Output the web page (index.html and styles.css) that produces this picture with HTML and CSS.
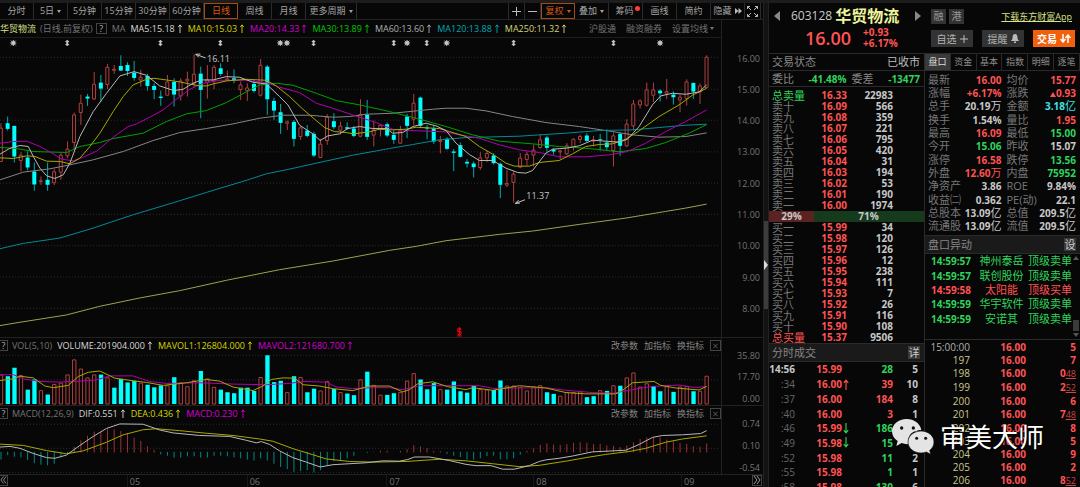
FILE: index.html
```html
<!DOCTYPE html>
<html lang="zh-CN">
<head>
<meta charset="utf-8">
<title>华贸物流 603128</title>
<link rel="stylesheet" href="styles.css">
</head>
<body>
<svg class="defs" aria-hidden="true">
  <symbol id="up" viewBox="0 0 6 10"><path d="M3 10V1M1 3.5L3 1L5 3.5" fill="none" stroke="currentColor"/></symbol>
  <symbol id="close" viewBox="0 0 12 12"><path d="M3 3L9 9M9 3L3 9" fill="none" stroke="currentColor"/></symbol>
</svg>
<div class="app">
  <main class="charts">
    <nav class="toolbar">
      <div class="group">
        <button class="tb">分时</button><button class="tb">5日<i class="caret"></i></button><button class="tb">5分钟</button><button class="tb">15分钟</button><button class="tb">30分钟</button><button class="tb">60分钟</button><button class="tb active">日线</button><button class="tb">周线</button><button class="tb">月线</button><button class="tb wide">更多周期<i class="caret"></i></button>
      </div>
      <div class="group right">
        <button class="tb icon" aria-label="放大"><svg width="9" height="9" viewBox="0 0 9 9"><path d="M4.5 0V9M0 4.5H9" stroke="#bbb"/></svg></button><button class="tb icon" aria-label="缩小"><svg width="9" height="9" viewBox="0 0 9 9"><path d="M0 4.5H9" stroke="#bbb"/></svg></button><button class="tb active">复权<i class="caret"></i></button><button class="tb">叠加<i class="caret"></i></button><button class="tb">筹码<i class="dot"></i></button><button class="tb">画线</button><button class="tb">简约</button><button class="tb">隐藏<svg width="7" height="6" viewBox="0 0 7 6"><path d="M0 0L3.5 3L0 6ZM3.5 0L7 3L3.5 6Z" fill="#bbb"/></svg></button><button class="tb icon" aria-label="全屏"><svg width="11" height="11" viewBox="0 0 11 11"><path d="M.5 3V.5H3M.5 .5L4 4M8 .5H10.500V3M10.500 .5L7 4M.5 8V10.500H3M.5 10.500L4 7M8 10.500H10.500V8M10.500 10.500L7 7" fill="none" stroke="#bbb"/></svg></button>
      </div>
    </nav>

    <section class="panel price">
      <header class="legend">
        <b class="stock">华贸物流</b><span class="dim">(日线,前复权)</span><button class="help">?</button><span class="dim">MA</span>
        <span class="c-white">MA5:15.18<svg class="up"><use href="#up"/></svg></span>
        <span class="c-yellow">MA10:15.03<svg class="up"><use href="#up"/></svg></span>
        <span class="c-magenta">MA20:14.33<svg class="up"><use href="#up"/></svg></span>
        <span class="c-green">MA30:13.89<svg class="up"><use href="#up"/></svg></span>
        <span class="c-gray">MA60:13.60<svg class="up"><use href="#up"/></svg></span>
        <span class="c-teal">MA120:13.88<svg class="up"><use href="#up"/></svg></span>
        <span class="c-khaki">MA250:11.32<svg class="up"><use href="#up"/></svg></span>
        <span class="links"><a href="#">沪股通</a><a href="#">融资融券</a><a href="#">设置均线<i class="caret"></i></a></span>
      </header>
      <div class="plot">
        <svg id="price" viewBox="0 114 2166 897" preserveAspectRatio="none"></svg>
        <span class="note high">16.11</span>
        <span class="note low">11.37</span>
      </div>
      <div class="axis nine"><span>16.00</span><span>15.00</span><span>14.00</span><span>13.00</span><span>12.00</span><span>11.00</span><span>10.00</span><span>9.00</span><span>8.00</span></div>
    </section>

    <section class="panel volume">
      <header class="legend">
        <button class="help">?</button><span class="dim">VOL(5,10)</span>
        <span class="c-white">VOLUME:201904.000<svg class="up"><use href="#up"/></svg></span>
        <span class="c-yellow">MAVOL1:126804.000<svg class="up"><use href="#up"/></svg></span>
        <span class="c-magenta">MAVOL2:121680.700<svg class="up"><use href="#up"/></svg></span>
        <span class="actions"><a href="#">改参数</a><a href="#">加指标</a><a href="#">换指标</a><button class="help" aria-label="关闭"><svg><use href="#close"/></svg></button></span>
      </header>
      <div class="plot"><svg id="volume" viewBox="0 54 2166 156" preserveAspectRatio="none"></svg></div>
      <div class="axis three"><span>35.80</span><span>17.70</span><span>0.00</span></div>
    </section>

    <section class="panel macd">
      <header class="legend">
        <button class="help">?</button><span class="dim">MACD(12,26,9)</span>
        <span class="c-white">DIF:0.551<svg class="up"><use href="#up"/></svg></span>
        <span class="c-yellow">DEA:0.436<svg class="up"><use href="#up"/></svg></span>
        <span class="c-magenta">MACD:0.230<svg class="up"><use href="#up"/></svg></span>
        <span class="actions"><a href="#">改参数</a><a href="#">加指标</a><a href="#">换指标</a><button class="help" aria-label="关闭"><svg><use href="#close"/></svg></button></span>
      </header>
      <div class="plot"><svg id="macd" viewBox="0 255 2166 162" preserveAspectRatio="none"></svg></div>
      <div class="axis three"><span>0.74</span><span>0.10</span><span>-0.54</span></div>
    </section>

    <footer class="months">
      <button class="page" aria-label="向前"><svg width="8" height="8" viewBox="0 0 8 8"><path d="M4 0L1 4L4 8M7 0L4 4L7 8" fill="none" stroke="#999"/></svg></button>
      <span>05</span><span>06</span><span>07</span><span>08</span><span>09</span>
      <button class="page" aria-label="向后"><svg width="8" height="8" viewBox="0 0 8 8"><path d="M1 0L4 4L1 8M4 0L7 4L4 8" fill="none" stroke="#999"/></svg></button>
    </footer>
  </main>

  <div class="splitter"><span class="gap"></span><button class="handle" aria-label="收起"><svg width="4" height="10" viewBox="0 0 4 10"><path d="M0 0L4 5L0 10Z" fill="#ddd"/></svg></button></div>

  <aside class="quote">
    <header class="head">
      <div class="ident">
        <svg width="6" height="10" viewBox="0 0 6 10"><path d="M6 0L0 5L6 10Z" fill="#888"/></svg>
        <span class="code">603128</span><h1>华贸物流</h1>
        <svg class="next" width="6" height="10" viewBox="0 0 6 10"><path d="M0 0L6 5L0 10Z" fill="#888"/></svg>
      </div>
      <div class="tags"><span>融</span><span>港</span><a href="#">下载东方财富App</a></div>
      <div class="last"><strong>16.00</strong><span>+0.93<br>+6.17%</span></div>
      <div class="cta">
        <button>自选<svg width="8" height="8" viewBox="0 0 8 8"><path d="M4 0V8M0 4H8" stroke="#bbb"/></svg></button>
        <button>提醒<svg width="8" height="9" viewBox="0 0 8 9"><path d="M4 0C2 0 1.500 2 1.500 4C1.500 6 0 6 0 7H8C8 6 6.500 6 6.500 4C6.500 2 6 0 4 0ZM3 7.500H5V9H3Z" fill="#bbb"/></svg></button>
        <button class="trade">交易<svg width="11" height="9" viewBox="0 0 11 9"><path d="M3 0V8M.5 5L3 8L5.500 5M8 9V1M5.500 4L8 1L10.500 4" fill="none" stroke="#fff" stroke-width="1.500"/></svg></button>
      </div>
    </header>

    <section class="book">
      <div class="bar status"><span>交易状态</span><span class="lit">已收市</span></div>
      <div class="bar ratio"><span>委比</span><b class="g">-41.48%</b><span>委差</span><b class="g">-13477</b></div>
      <table class="levels asks">
        <tr class="g"><th>总卖量</th><td>16.33</td><td>22983</td></tr>
        <tr><th>卖十</th><td>16.09</td><td>566</td></tr>
        <tr><th>卖九</th><td>16.08</td><td>359</td></tr>
        <tr><th>卖八</th><td>16.07</td><td>221</td></tr>
        <tr><th>卖七</th><td>16.06</td><td>795</td></tr>
        <tr><th>卖六</th><td>16.05</td><td>420</td></tr>
        <tr><th>卖五</th><td>16.04</td><td>31</td></tr>
        <tr><th>卖四</th><td>16.03</td><td>194</td></tr>
        <tr><th>卖三</th><td>16.02</td><td>53</td></tr>
        <tr><th>卖二</th><td>16.01</td><td>190</td></tr>
        <tr><th>卖一</th><td>16.00</td><td>1974</td></tr>
      </table>
      <div class="balance"><b>29%</b><b>71%</b></div>
      <table class="levels">
        <tr><th>买一</th><td>15.99</td><td>34</td></tr>
        <tr><th>买二</th><td>15.98</td><td>120</td></tr>
        <tr><th>买三</th><td>15.97</td><td>126</td></tr>
        <tr><th>买四</th><td>15.96</td><td>12</td></tr>
        <tr><th>买五</th><td>15.95</td><td>238</td></tr>
        <tr><th>买六</th><td>15.94</td><td>111</td></tr>
        <tr><th>买七</th><td>15.93</td><td>7</td></tr>
        <tr><th>买八</th><td>15.92</td><td>26</td></tr>
        <tr><th>买九</th><td>15.91</td><td>116</td></tr>
        <tr><th>买十</th><td>15.90</td><td>108</td></tr>
        <tr class="r"><th>总买量</th><td>15.37</td><td>9506</td></tr>
      </table>
      <div class="bar title"><span>分时成交</span><button>详</button></div>
      <div class="fill">
        <table class="ticks">
          <tr><th class="lit">14:56</th><td>15.99</td><td></td><td class="g">28</td><td>5</td></tr>
          <tr><th>:34</th><td>16.00</td><td><svg class="arr"><use href="#up"/></svg></td><td class="r">39</td><td>10</td></tr>
          <tr><th>:37</th><td>16.00</td><td></td><td class="r">184</td><td>8</td></tr>
          <tr><th>:40</th><td>16.00</td><td></td><td class="r">3</td><td>1</td></tr>
          <tr><th>:46</th><td>15.99</td><td><svg class="arr down"><use href="#up"/></svg></td><td class="g">186</td><td>4</td></tr>
          <tr><th>:49</th><td>15.98</td><td><svg class="arr down"><use href="#up"/></svg></td><td class="g">15</td><td>4</td></tr>
          <tr><th>:52</th><td>15.98</td><td></td><td class="g">11</td><td>2</td></tr>
          <tr><th>:55</th><td>15.98</td><td></td><td class="g">1</td><td>1</td></tr>
          <tr><th>:58</th><td>15.98</td><td></td><td class="g">130</td><td>6</td></tr>
        </table>
      </div>
    </section>

    <section class="detail">
      <nav class="tabs"><button class="on">盘口</button><button>资金</button><button>基本</button><button>指数</button><button>明细</button><button>逐笔</button></nav>
      <table class="stats">
        <tr><th>最新</th><td class="r">16.00</td><th>均价</th><td class="r">15.77</td></tr>
        <tr><th>涨幅</th><td class="r">+6.17%</td><th>涨跌</th><td class="r"><i class="tri"></i>0.93</td></tr>
        <tr><th>总手</th><td>20.19<em>万</em></td><th>金额</th><td class="t">3.18<em>亿</em></td></tr>
        <tr><th>换手</th><td>1.54%</td><th>量比</th><td class="r">1.95</td></tr>
        <tr><th>最高</th><td class="r">16.09</td><th>最低</th><td class="g">15.00</td></tr>
        <tr><th>今开</th><td class="g">15.06</td><th>昨收</th><td>15.07</td></tr>
        <tr><th>涨停</th><td class="r">16.58</td><th>跌停</th><td class="g">13.56</td></tr>
        <tr><th>外盘</th><td class="r">12.60<em>万</em></td><th>内盘</th><td class="g">75952</td></tr>
        <tr><th>净资产</th><td>3.86</td><th>ROE</th><td>9.84%</td></tr>
        <tr><th>收益㈡</th><td>0.362</td><th>PE(动)</th><td>22.1</td></tr>
        <tr><th>总股本</th><td>13.09<em>亿</em></td><th>总值</th><td>209.5<em>亿</em></td></tr>
        <tr><th>流通股</th><td>13.09<em>亿</em></td><th>流值</th><td>209.5<em>亿</em></td></tr>
      </table>
      <div class="bar title"><span>盘口异动</span><button>设</button></div>
      <div class="alerts">
        <table>
          <tr class="g"><th>14:59:57</th><td>神州泰岳</td><td>顶级卖单</td></tr>
          <tr class="g"><th>14:59:57</th><td>联创股份</td><td>顶级卖单</td></tr>
          <tr class="r"><th>14:59:58</th><td>太阳能</td><td>顶级买单</td></tr>
          <tr class="g"><th>14:59:59</th><td>华宇软件</td><td>顶级卖单</td></tr>
          <tr class="g"><th>14:59:59</th><td>安诺其</td><td>顶级卖单</td></tr>
        </table>
        <div class="scroll"><i class="sup"></i><i class="thumb"></i><i class="sdn"></i></div>
      </div>
      <table class="trades">
        <tr><th class="lit">15:00:00</th><td>16.00</td><td>5</td></tr>
        <tr><th>197</th><td>16.00</td><td>7</td></tr>
        <tr><th>198</th><td>16.00</td><td>0<u>48</u></td></tr>
        <tr><th>199</th><td>16.00</td><td>2<u>52</u></td></tr>
        <tr><th>200</th><td>16.00</td><td>6</td></tr>
        <tr><th>201</th><td>16.00</td><td>7<u>48</u></td></tr>
        <tr><th>202</th><td>16.00</td><td>8</td></tr>
        <tr><th>203</th><td>16.00</td><td>5</td></tr>
        <tr><th>204</th><td>16.00</td><td>9</td></tr>
        <tr><th>205</th><td>16.00</td><td>2</td></tr>
        <tr><th>206</th><td>16.00</td><td>8<u>52</u></td></tr>
      </table>
    </section>
  </aside>

  <div class="watermark">
    <svg width="42" height="36" viewBox="0 0 126 108"><path d="M44 0C20 0 0 16 0 37C0 49 6 59 17 66L13 81L29 72C36 75 44 76 50 75C43 50 62 33 88 33C84 13 66 0 44 0Z" fill="#e4e4e4"/><path d="M87 36C65 36 48 51 48 69C48 88 66 102 87 102C93 102 98 101 103 99L116 106L113 94C121 88 126 79 126 69C126 51 109 36 87 36Z" fill="#e4e4e4" stroke="#111" stroke-width="2"/><g fill="#111"><circle cx="29" cy="27" r="5"/><circle cx="64" cy="27" r="5"/><circle cx="74" cy="58" r="4.500"/><circle cx="101" cy="58" r="4.500"/></g></svg>
    <span>审美大师</span>
  </div>
</div>
<script src="chart.js"></script>
</body>
</html>
```
FILE: styles.css
```css
* { box-sizing: border-box; }
html, body { height: 100%; }
body {
  margin: 0;
  overflow: hidden;
  background: #070707;
  color: #c8c8c8;
  font: 9px/12px "Open Sans", "Noto Sans CJK SC", sans-serif;
}
button {
  margin: 0; padding: 0; border: 0;
  background: none; color: inherit; font: inherit;
}
a { color: inherit; text-decoration: none; }
table { border-collapse: collapse; width: 100%; }
th, td { padding: 0; font-weight: 700; text-align: right; white-space: nowrap; }
th { font-weight: 400; text-align: left; }
.defs { position: absolute; width: 0; height: 0; }
.r { color: #ff5353; }
.g { color: #2fd45c; }
.t { color: #42e0e6; }
.lit { color: #bdbdbd; }

.app {
  position: relative;
  display: grid;
  grid-template-columns: minmax(0, 1fr) 5px 311px;
  height: 100vh;
  border-top: 3px solid #1d1d1d;
}

/* left: charts */
.charts {
  display: grid;
  grid-template-rows: 17px minmax(0, 1fr) 68px 69px 13px;
  min-width: 0;
  border-right: 1px solid #222;
}
.toolbar { display: flex; justify-content: space-between; border-bottom: 1px solid #222; }
.group { display: flex; }
.group.right { border-left: 1px solid #2c2c2c; padding-right: 2px; }
.tb {
  display: flex; align-items: center; justify-content: center; gap: 3px;
  width: 34px; height: 16px;
  border-right: 1px solid #2c2c2c;
  color: #a4a4a4;
  white-space: nowrap;
}
.tb.wide { width: 51px; }
.tb.icon { width: 16px; }
.tb.active { border: 1px solid #a44a14; color: #d8590f; }
.caret { border: 2px solid transparent; border-top: 3px solid currentColor; border-bottom: 0; }
.dot { width: 5px; height: 5px; margin: 0 -4px 5px -2px; border-radius: 50%; background: #ff3b3b; }

.panel {
  display: grid;
  grid-template: "legend axis" auto "plot axis" minmax(0, 1fr) / minmax(0, 1fr) 41px;
  border-bottom: 1px solid #222;
}
.legend {
  grid-area: legend;
  display: flex; align-items: center; gap: 5px;
  height: 16px;
  border-right: 1px solid #222;
  white-space: nowrap;
}
.price .legend { height: 18px; border-bottom: 1px solid #1c1c1c; }
.legend span { display: flex; align-items: center; }
.legend .up { width: 6px; height: 9px; margin-left: 2px; }
.stock { color: #d9e08a; font-weight: 400; }
.dim { color: #747474; }
.price .dim:nth-child(2) { margin-left: -1px; }
.help {
  display: flex; align-items: center; justify-content: center;
  width: 11px; height: 11px;
  border: 1px solid #444;
  color: #b0b0b0;
}
.price .help { margin-left: -2px; }
.help svg { width: 10px; height: 10px; color: #777; }
.volume .legend > .help, .macd .legend > .help { width: 8px; border-left: 0; margin-right: -1px; }
.c-white { color: #d8d8d8; } .c-yellow { color: #d6d600; } .c-magenta { color: #d400d4; }
.c-green { color: #00c800; } .c-gray { color: #b0b0b0; } .c-teal { color: #00a8b8; } .c-khaki { color: #d6d67a; }
.legend .links { margin-left: auto; padding-right: 7px; gap: 10px; color: #747474; }
.links a { display: flex; align-items: center; gap: 2px; }
.legend .actions { margin-left: auto; gap: 6px; color: #848484; }
.plot { grid-area: plot; position: relative; min-height: 0; border-right: 1px solid #222; }
.plot svg { display: block; width: 100%; height: 100%; }
.plot svg * { vector-effect: non-scaling-stroke; }
.note { position: absolute; color: #c8c8c8; }
.note.high { left: 207px; top: 5%; }
.note.low { left: 73%; top: 51%; }
.axis {
  grid-area: axis;
  display: flex; flex-direction: column;
  padding-right: 3px;
  color: #747474;
  text-align: right;
}
.axis.nine { padding: 23px 3px 12px 0; }
.axis.nine span { flex: 1; display: flex; align-items: center; justify-content: flex-end; }
.axis.three { justify-content: space-between; padding-top: 12px; }

.grid { stroke: #2b2b2b; stroke-dasharray: 1 2; fill: none; }
.up-wick, .up-body { stroke: #b04040; fill: #070707; }
.up-wick { fill: none; }
.down-wick { stroke: #0aa; }
.down-body { fill: #0ff; }
.mark { stroke: #c4c4c4; fill: none; }
.mark-dot { fill: #c4c4c4; }
.line { fill: none; }
.s-white { stroke: #b8b8b8; } .s-yellow { stroke: #a8a800; } .s-magenta { stroke: #b000b0; }
.s-green { stroke: #00a000; } .s-gray { stroke: #858585; } .s-teal { stroke: #008a96; } .s-khaki { stroke: #a0a050; }
.pos { stroke: #a03030; } .neg { stroke: #088; }
.flag { stroke: #f00; fill: none; }

.months {
  display: grid;
  grid-template-columns: 127fr 120fr 140fr 147fr 148fr 71fr 11px;
  color: #747474;
  line-height: 13px;
}
.months span { border-left: 1px solid #181818; padding-left: 2px; }
.page {
  display: flex; align-items: center; justify-content: center;
  width: 10px; height: 11px;
  border: 1px solid #444;
}
.page:first-child { width: 8px; border-left: 0; }

.splitter { background: #131313; border-right: 1px solid #222; display: grid; grid-template-rows: 45% 88px; }
.handle { display: flex; align-items: center; background: #3c3c3c; }

/* right: quote */
.quote {
  display: grid;
  grid-template: "head head" 51px "book detail" minmax(0, 1fr) / 156px minmax(0, 1fr);
  min-width: 0;
  overflow: hidden;
}
.head {
  grid-area: head;
  display: grid;
  grid-template: 25px 25px / 162px minmax(0, 1fr);
  border-bottom: 1px solid #2a2a2a;
}
.ident { display: flex; align-items: center; padding: 0 10px 0 5px; }
.code { margin-left: 11px; font-size: 12px; }
.ident h1 { margin: 0 0 0 3px; font-size: 16px; font-weight: 700; color: #eef49a; line-height: 20px; white-space: nowrap; }
.next { margin-left: auto; }
.tags { display: flex; align-items: center; gap: 3px; padding: 2px 8px 0 0; }
.tags span { width: 15px; line-height: 15px; background: #333; color: #999; text-align: center; font-size: 10px; }
.tags a { margin-left: auto; color: #d9e08a; text-decoration: underline; white-space: nowrap; }
.last { display: flex; align-items: center; gap: 12px; padding: 0 0 6px 36px; color: #ff5353; }
.last strong { font-size: 18px; font-weight: 600; }
.last span { font-size: 10px; font-weight: 700; line-height: 11px; }
.cta { display: flex; justify-content: space-between; padding: 2px 5px 6px 0; font-size: 10px; }
.cta button {
  display: flex; align-items: center; justify-content: center; gap: 3px;
  width: 42px; height: 17px; background: #333; color: #b4b4b4;
}
.cta .trade { background: #f2600c; color: #fff; font-weight: 700; }

.book { grid-area: book; border-right: 1px solid #2a2a2a; display: flex; flex-direction: column; min-height: 0; }
.bar {
  display: flex; align-items: center; justify-content: space-between; flex: none;
  height: 17px; padding: 0 4px 0 3px;
  border-bottom: 1px solid #2a2a2a;
  color: #868686;
  font-size: 11px;
}
.bar b { font-size: 10px; }
.ratio { height: 16px; }
.ratio b:nth-child(2) { margin: 0 0 0 auto; padding-right: 5px; }
.ratio b:last-child { margin-left: auto; }
.title { height: 19px; background: #1a1a1a; border-top: 1px solid #2a2a2a; }
.title button { width: 12px; line-height: 13px; background: #3a3a3a; color: #ccc; }
.levels { font-size: 10px; line-height: 11px; table-layout: fixed; flex: none; }
.levels.asks { margin-top: 3px; }
.levels th { height: 11px; width: 37px; padding-left: 3px; font-size: 11px; color: #787878; }
.levels .g th { color: #2fd45c; }
.levels .r th { color: #ff5353; }
.levels td:nth-child(2) { width: 41px; color: #ff5353; }
.levels td:nth-child(3) { color: #c8c8c8; padding-right: 31px; }
.balance { display: grid; grid-template-columns: 29fr 71fr; flex: none; font-size: 10px; line-height: 11px; text-align: center; }
.balance b:first-child { background: #5a2222; }
.balance b:last-child { background: #153a1c; padding-right: 1px; }
.fill { flex: 1; margin-bottom: -7px; min-height: 0; }
.ticks { height: 100%; font-size: 10px; line-height: 12px; table-layout: fixed; }
.ticks th { width: 26px; text-align: right; color: #686868; }
.ticks th.lit { color: #c8c8c8; font-weight: 700; }
.ticks td:nth-child(2) { width: 47px; color: #ff5353; }
.ticks td:nth-child(3) { width: 8px; color: #ff5353; text-align: left; }
.ticks td:nth-child(4) { width: 43px; }
.ticks td:nth-child(5) { padding-right: 6px; }
.arr { display: block; width: 8px; height: 11px; stroke-width: 1; }
.down { transform: rotate(180deg); color: #2fd45c; }

.detail { grid-area: detail; display: flex; flex-direction: column; min-width: 0; min-height: 0; }
.tabs { display: flex; flex: none; height: 17px; border-bottom: 1px solid #2a2a2a; }
.tabs button { flex: 1; border-right: 1px solid #2a2a2a; color: #8c8c8c; }
.tabs .on { background: #3a3a3a; color: #ddd; }
.stats { height: 160px; margin: 2px 0; font-size: 10px; line-height: 12px; table-layout: fixed; flex: none; }
.stats th { width: 32px; padding-left: 3px; color: #787878; font-size: 11px; }
.stats th:nth-child(3) { width: 34px; padding-left: 5px; }
.stats td:last-child { padding-right: 4px; }
.stats em { font-style: normal; font-weight: 400; font-size: 11px; }
.tri { display: inline-block; border: 3px solid transparent; border-top: 0; border-bottom: 5px solid currentColor; }
.alerts { display: flex; flex: none; height: 86px; border-bottom: 1px solid #2a2a2a; }
.alerts table { height: 72px; font-size: 11px; line-height: 14px; table-layout: fixed; }
.alerts th { width: 46px; font-size: 10px; font-weight: 700; text-align: right; }
.alerts td { font-weight: 400; text-align: center; padding-left: 5px; }
.alerts td:last-child { width: 45px; padding-left: 0; text-align: right; }
.scroll { display: flex; flex-direction: column; align-items: center; flex: none; width: 8px; padding: 2px 0; }
.scroll .thumb { width: 6px; height: 11px; margin: auto 0 2px; background: #3a3a3a; }
.sup { border: 3px solid transparent; border-top: 0; border-bottom: 4px solid #555; }
.sdn { border: 3px solid transparent; border-bottom: 0; border-top: 4px solid #555; }
.trades { flex: 1; display: table; height: 146px; font-size: 10px; line-height: 12px; table-layout: fixed; }
.trades th { width: 45px; text-align: right; color: #c9c98a; }
.trades th.lit { color: #b0b0b0; }
.trades td { color: #ff5353; }
.trades td:nth-child(2) { width: 56px; }
.trades td:last-child { padding-right: 4px; }
.trades u { font-size: 9px; font-weight: 400; color: #c44; }

.watermark {
  position: absolute; right: 36px; bottom: 32px;
  display: flex; align-items: center; gap: 6px;
  color: #fff; font-size: 26px; line-height: 36px;
  text-shadow: 1px 1px 1px #000;
}
```
FILE: chart.js
```js
const STEP = 20, X0 = 3;
const x = i => X0 + i * STEP;

// body top, body bottom, high, low; a leading 1 marks a falling day
const days = `0 385 485 370 485|1 370 387 350 392|1 378 470 378 488|0 466 482 457 515|1 473 503 455 512|1 515 554 488 573|0 543 545 530 555|1 540 555 488 573|0 516 549 508 556|0 466 517 460 540|0 448 468 425 475|0 345 428 338 450|0 310 338 284 375|1 290 296 282 318|0 253 297 216 300|1 248 266 225 305|0 202 254 192 268|0 208 211 195 222|1 198 212 166 212|1 195 213 187 228|1 218 234 183 242|0 232 240 210 260|1 228 258 222 272|1 258 270 250 298|1 290 294 272 318|0 246 286 225 286|1 246 284 235 320|0 243 288 235 302|0 238 243 215 290|0 223 250 163 262|1 221 270 200 355|0 240 247 195 296|0 202 243 195 268|1 205 222 190 228|0 237 240 212 242|1 235 240 208 250|0 255 269 245 300|0 264 272 250 303|1 252 273 240 278|0 196 286 177 290|1 200 298 195 345|1 303 332 293 360|1 337 369 312 402|0 366 370 362 390|1 366 417 360 440|0 384 410 380 420|1 392 408 375 412|1 402 467 396 472|0 433 473 417 475|0 352 422 343 435|1 364 382 340 388|0 379 391 365 404|1 382 387 367 390|1 386 408 378 412|0 344 409 298 412|1 344 411 300 420|0 390 406 362 440|0 376 388 374 410|1 373 407 368 412|1 405 420 392 432|0 393 430 378 432|1 350 378 342 415|0 310 358 282 375|1 293 378 290 385|1 383 386 375 418|1 386 425 376 432|0 422 425 408 461|1 417 447 412 450|1 455 459 448 514|1 436 471 428 473|1 486 491 478 503|1 491 502 485 533|0 474 503 457 510|0 461 474 452 487|1 467 490 460 494|1 492 555 488 595|0 551 556 510 562|0 523 548 515 608|0 475 502 460 505|0 464 479 455 497|0 451 466 434 500|0 420 443 402 446|1 413 444 408 455|1 449 455 445 465|0 453 456 450 478|0 438 462 430 466|0 418 443 416 452|0 410 419 404 430|1 407 423 400 426|0 421 424 408 440|1 418 420 402 452|1 428 442 388 450|0 408 452 398 500|1 402 438 398 468|0 373 438 358 442|0 312 378 300 392|0 303 315 298 326|0 270 316 248 320|0 270 286 248 307|1 272 280 268 305|0 275 280 237 298|1 284 292 274 314|0 292 300 284 337|0 246 296 238 317|1 249 275 248 297|0 258 276 250 312|0 172 263 166 265`
  .split('|').map(r => r.split(' ').map(Number));

// bar tops, negative for a falling day
const volumes = [118,-122,-96,120,-163,-132,166,-178,147,143,118,72,100,127,118,-117,127,-157,-130,-141,-136,143,-148,-156,-150,151,-125,142,154,136,-106,130,156,-163,-171,-174,-157,-157,-167,126,-58,-140,-136,172,-122,126,-171,-160,167,138,-161,172,-175,-180,133,-108,150,180,-179,-174,172,137,114,-132,-162,-143,163,-163,-138,-168,-172,-151,163,164,-164,-135,152,152,156,167,155,151,-171,-176,183,172,172,170,-186,-183,166,-167,151,-151,127,112,155,145,-152,-168,154,-170,155,153,-168,168,122];
const macdBars = [372,358,363,365,373,383,388,390,385,365,352,332,312,298,285,287,277,278,283,290,304,314,330,342,356,360,366,366,362,362,366,366,360,360,362,365,368,372,375,368,375,385,395,402,410,408,405,412,405,390,378,375,368,360,348,351,349,344,344,348,345,340,327,331,336,345,346,354,360,364,372,372,368,361,360,371,371,368,357,345,337,326,322,325,326,324,320,318,320,324,323,328,329,333,328,318,308,303,302,303,310,315,320,323,330,332,322];

const el = (svg, name, attrs) => {
  const n = document.createElementNS('http://www.w3.org/2000/svg', name);
  for (const k in attrs) n.setAttribute(k, attrs[k]);
  svg.appendChild(n);
};
const grid = (svg, ys) => ys.forEach(y => el(svg, 'path', { class: 'grid', d: `M0 ${y}H2160` }));
const line = (svg, color, pts) => el(svg, 'polyline', { class: 'line s-' + color, points: pts });

const price = document.getElementById('price');
grid(price, [172, 268, 361, 456, 550, 644, 738, 832, 926]);
days.forEach(([down, top, bottom, high, low], i) => {
  const cx = x(i);
  if (down) {
    el(price, 'path', { class: 'down-wick', d: `M${cx} ${high}V${low}` });
    el(price, 'rect', { class: 'down-body', x: cx - 6, y: top, width: 12, height: bottom - top });
  } else {
    el(price, 'path', { class: 'up-wick', d: `M${cx} ${high}V${top}M${cx} ${bottom}V${low}` });
    el(price, 'rect', { class: 'up-body', x: cx - 5, y: top, width: 9, height: bottom - top });
  }
});
line(price, 'gray', '0,540 70,517 150,507 210,495 280,480 370,455 460,422 540,398 620,386 700,372 780,355 850,346 930,346 1000,352 1050,350 1100,343 1180,340 1240,334 1300,328 1340,325 1400,325 1460,333 1540,350 1640,368 1740,380 1840,395 1900,405 1980,412 2060,410 2123,399');
line(price, 'teal', '0,747 70,731 180,715 280,685 400,645 520,609 620,578 745,540 800,522 860,510 950,490 1060,466 1170,446 1240,434 1320,420 1400,413 1560,409 1700,400 1800,392 1900,390 1980,383 2060,376 2123,373');
line(price, 'khaki', '0,978 60,968 200,946 300,920 420,895 540,873 680,842 840,810 1000,784 1170,752 1250,740 1340,723 1500,704 1600,694 1740,674 1880,655 2000,635 2060,625 2123,613');
line(price, 'green', '0,443 50,446 100,455 200,458 240,440 300,428 340,416 430,400 500,365 560,342 620,332 680,308 740,276 780,255 830,250 880,256 950,280 1010,302 1080,315 1170,335 1250,355 1340,380 1420,405 1500,424 1600,432 1680,440 1770,446 1860,456 1940,446 2000,428 2070,400 2123,374');
line(price, 'magenta', '0,430 40,425 80,424 120,440 160,462 185,478 220,483 250,472 290,454 340,412 385,380 410,372 450,352 490,330 530,298 570,268 610,250 660,241 740,241 800,248 840,262 900,278 950,310 1000,325 1080,352 1130,368 1180,388 1230,392 1340,396 1380,405 1440,415 1500,435 1560,450 1620,458 1680,471 1760,471 1830,465 1885,455 1940,430 2000,395 2060,365 2123,330');
line(price, 'yellow', '0,474 40,476 80,468 105,470 140,484 180,485 210,492 240,475 270,440 300,400 340,335 370,290 400,255 440,238 462,235 500,240 540,246 600,258 620,258 640,252 680,243 740,238 800,241 830,258 870,290 910,328 950,362 975,383 1005,395 1040,398 1062,402 1110,396 1140,388 1180,390 1220,388 1250,382 1320,386 1350,395 1400,410 1440,440 1480,463 1520,490 1545,499 1590,499 1620,488 1680,482 1720,462 1760,440 1800,434 1840,432 1880,418 1920,393 1980,350 2040,315 2080,286 2123,265');
line(price, 'white', '0,463 30,445 60,437 85,440 100,470 120,505 140,528 165,536 190,525 210,490 240,410 280,335 320,280 360,228 403,215 440,226 480,258 522,272 550,268 580,250 605,240 640,240 680,230 720,232 760,247 800,252 840,290 865,315 900,376 940,402 962,422 985,408 1020,402 1045,386 1080,380 1120,386 1160,386 1180,400 1210,398 1240,380 1280,370 1310,378 1340,392 1370,430 1410,464 1440,482 1480,482 1520,505 1555,518 1580,520 1600,512 1640,460 1660,448 1700,445 1740,438 1780,421 1820,424 1860,427 1885,418 1920,380 1960,315 1985,288 2020,280 2060,283 2100,276 2123,255');

// event markers
[40, 842, 862, 1223, 1342, 1983].forEach(cx => {
  el(price, 'circle', { class: 'mark-dot', cx, cy: 129, r: 6 });
  el(price, 'path', { class: 'mark', d: `M${cx - 9} 129H${cx + 9}M${cx} 120V138M${cx - 7} 122L${cx + 7} 136M${cx + 7} 122L${cx - 7} 136` });
});
[202, 482, 662, 942, 1183, 1282, 1543, 1843].forEach(cx =>
  el(price, 'path', { class: 'mark-dot', d: `M${cx} 119L${cx + 7} 126H${cx + 3}V132H${cx + 7}L${cx} 139L${cx - 7} 132H${cx - 3}V126H${cx - 7}Z` }));
el(price, 'path', { class: 'mark', d: 'M588 163L618 174M588 163L602 162M588 163L597 172' });
el(price, 'path', { class: 'mark', d: 'M1577 600L1548 611M1548 611L1558 601M1548 611L1562 610' });
el(price, 'path', { class: 'flag', d: 'M1385 989H1375V996H1385V1004H1375M1373 1009H1387M1380 983L1374 989M1380 983L1386 989M1380 984V1008' });

const volume = document.getElementById('volume');
grid(volume, [58, 133]);
volumes.forEach((v, i) => {
  const top = Math.abs(v);
  el(volume, 'rect', v < 0
    ? { class: 'down-body', x: x(i) - 6, y: top, width: 13, height: 207 - top }
    : { class: 'up-body', x: x(i) - 5, y: top, width: 10, height: 207 - top });
});
line(volume, 'magenta', '0,118 40,117 70,130 120,138 180,140 240,137 290,133 330,121 400,121 450,138 500,144 600,142 700,146 800,148 870,144 910,138 980,140 1010,155 1060,160 1120,157 1170,157 1210,163 1260,151 1370,151 1440,151 1480,159 1560,158 1640,157 1700,165 1780,172 1840,174 1900,163 1960,153 2040,149 2090,157 2123,153');
line(volume, 'yellow', '0,135 40,130 60,122 100,127 135,152 160,157 205,150 235,123 265,110 300,106 345,128 400,136 440,141 490,150 560,142 620,132 660,137 700,155 760,166 790,152 815,132 850,127 885,128 910,148 960,152 1000,160 1060,166 1110,152 1170,152 1210,170 1230,163 1255,145 1300,139 1345,154 1400,163 1420,157 1480,165 1560,151 1640,158 1700,172 1760,176 1850,176 1870,165 1900,142 1965,138 1985,150 2030,158 2100,164 2123,153');

const macd = document.getElementById('macd');
grid(macd, [262, 337, 412]);
macdBars.forEach((y, i) =>
  el(macd, 'path', { class: y < 348 ? 'pos' : 'neg', d: `M${x(i)} ${y < 348 ? 350 : 348}V${y}` }));
line(macd, 'yellow', '0,324 70,328 140,344 200,354 250,345 320,318 370,295 430,279 470,276 540,282 620,290 700,297 780,308 820,315 880,338 940,357 980,370 1050,378 1120,380 1220,378 1320,371 1400,376 1480,385 1560,394 1620,390 1700,377 1760,366 1820,356 1890,347 1940,337 2000,318 2050,308 2123,298');
line(macd, 'white', '0,333 30,331 60,337 100,353 140,366 165,368 200,358 240,328 280,300 320,275 360,261 430,262 480,280 520,289 600,297 690,300 740,312 770,320 785,316 810,325 840,345 880,366 920,380 962,395 1000,388 1100,382 1150,376 1200,377 1225,372 1245,364 1290,364 1350,375 1400,387 1430,391 1475,391 1510,402 1545,402 1590,391 1620,378 1640,373 1680,368 1720,361 1780,348 1880,343 1920,325 1960,303 1990,297 2050,295 2105,291 2123,282');
```
